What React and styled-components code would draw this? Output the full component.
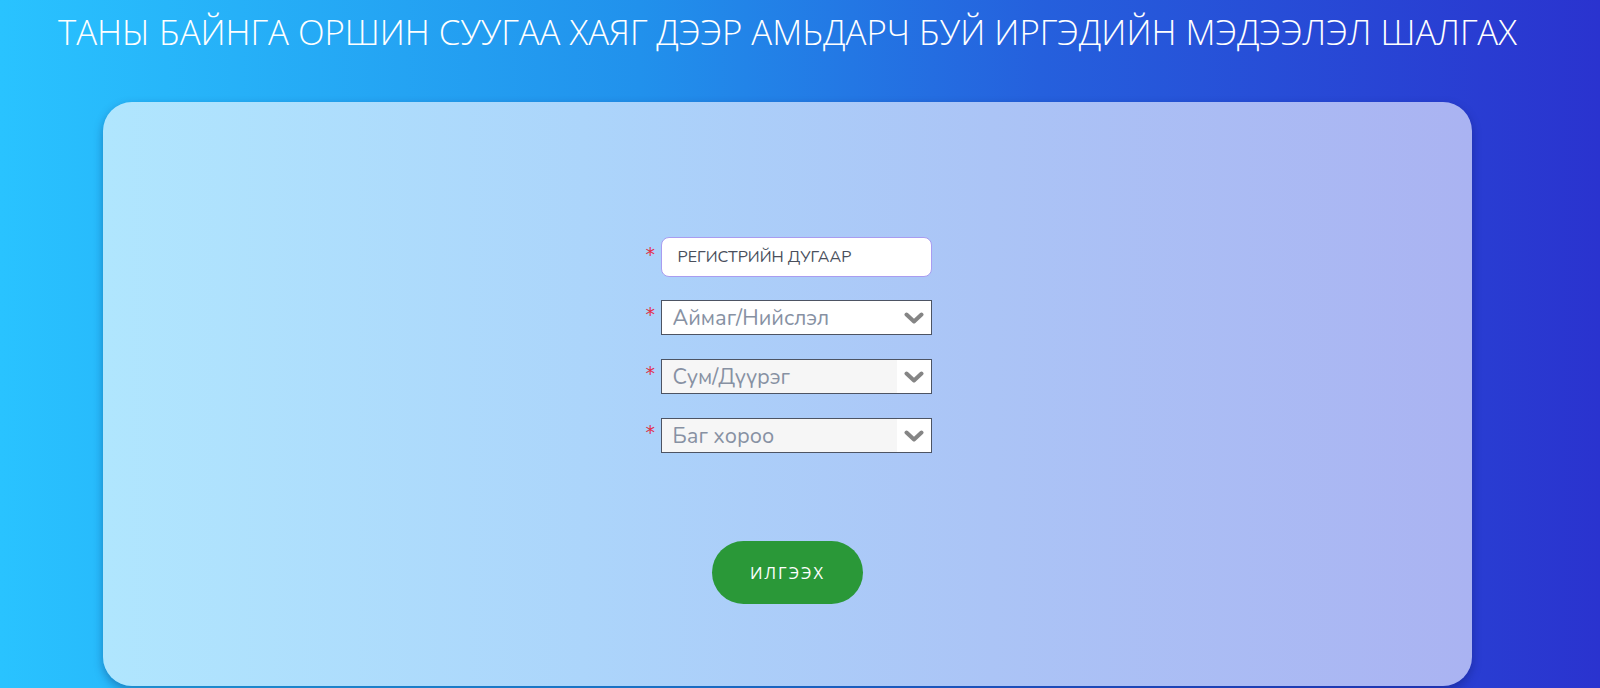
import React from "react";
import styled, { createGlobalStyle } from "styled-components";

const Global = createGlobalStyle`
  html, body { margin: 0; padding: 0; }
  body {
    height: 688px;
    overflow: hidden;
    background: linear-gradient(90deg, #29c3ff 0%, #2191ec 40%, #2560dd 65%, #2a33cf 100%);
    font-family: "Nunito", "Open Sans", "Lato", sans-serif;
  }
`;

const Page = styled.div`
  display: flex;
  flex-direction: column;
`;

const Title = styled.h1`
  flex-shrink: 0;
  margin: 0;
  padding: 8px 0 0 58px;
  height: 92px;
  box-sizing: border-box;
  font-family: "Open Sans", sans-serif;
  font-weight: 300;
  font-size: 34.75px;
  letter-spacing: 0;
  color: #ffffff;
  white-space: nowrap;
`;

const Card = styled.div`
  flex-shrink: 0;
  margin: 10px 0 0 103px;
  width: 1369px;
  height: 584px;
  box-sizing: border-box;
  border-radius: 29px;
  background: linear-gradient(90deg, #b0e6fe 0%, #acd5fb 35%, #abc4f6 65%, #aab3f2 100%);
  box-shadow: 0 4px 10px rgba(10, 20, 80, 0.35);
  display: flex;
  flex-direction: column;
  align-items: center;
  padding-top: 135px;
`;

const Form = styled.div`
  display: flex;
  flex-direction: column;
  gap: 23px;
  padding-left: 5px;
`;

const Fields = styled.div`
  display: flex;
  flex-direction: column;
  gap: 24px;
`;

const Row = styled.div`
  display: flex;
  align-items: center;
  gap: 6px;
`;

const Star = styled.span`
  width: 9px;
  margin-left: -3px;
  color: #e0314b;
  font-family: "DejaVu Sans", sans-serif;
  font-size: 19px;
  line-height: 1;
  margin-top: -6px;
`;

const TextInput = styled.div`
  width: 271px;
  height: 40px;
  box-sizing: border-box;
  border: 1px solid #a99cf0;
  border-radius: 8px;
  background: #ffffff;
  display: flex;
  align-items: center;
  padding-left: 16px;
  font-family: "Nunito", "Open Sans", sans-serif;
  font-size: 16px;
  color: #4a4f5c;
`;

const Select = styled.div`
  width: 271px;
  height: 35px;
  box-sizing: border-box;
  border: 1px solid #4d5463;
  background: ${(p) => (p.$muted ? "#f6f6f6" : "#ffffff")};
  display: flex;
  align-items: stretch;
`;

const SelectText = styled.span`
  flex: 1;
  display: flex;
  align-items: center;
  padding-left: 11px;
  font-family: "Nunito", "Open Sans", sans-serif;
  font-size: 21.6px;
  color: #8791a3;
`;

const Arrow = styled.span`
  width: 34px;
  background: #ffffff;
  display: flex;
  align-items: center;
  justify-content: center;
`;

const ButtonWrap = styled.div`
  display: flex;
  justify-content: center;
  margin-top: 88px;
`;

const Button = styled.button`
  width: 151px;
  height: 63px;
  border: none;
  border-radius: 32px;
  background: #2a9838;
  color: #ffffff;
  font-family: "Open Sans", sans-serif;
  font-size: 16.5px;
  letter-spacing: 2px;
  cursor: pointer;
`;

const Chevron = () => (
  <svg width="20" height="14" viewBox="0 0 20 14">
    <path d="M2.5 3.5 L10 10.5 L17.5 3.5" fill="none" stroke="#858585" strokeWidth="4" strokeLinecap="round" strokeLinejoin="round" />
  </svg>
);

const selects = [
  { label: "Аймаг/Нийслэл", muted: false },
  { label: "Сум/Дүүрэг", muted: true },
  { label: "Баг хороо", muted: true },
];

export default function App() {
  return (
    <Page>
      <Global />
      <Title>ТАНЫ БАЙНГА ОРШИН СУУГАА ХАЯГ ДЭЭР АМЬДАРЧ БУЙ ИРГЭДИЙН МЭДЭЭЛЭЛ ШАЛГАХ</Title>
      <Card>
        <Form>
          <Row>
            <Star>*</Star>
            <TextInput>РЕГИСТРИЙН ДУГААР</TextInput>
          </Row>
          <Fields>
            {selects.map((s) => (
              <Row key={s.label}>
                <Star>*</Star>
                <Select $muted={s.muted}>
                  <SelectText>{s.label}</SelectText>
                  <Arrow><Chevron /></Arrow>
                </Select>
              </Row>
            ))}
          </Fields>
        </Form>
        <ButtonWrap>
          <Button>ИЛГЭЭХ</Button>
        </ButtonWrap>
      </Card>
    </Page>
  );
}
